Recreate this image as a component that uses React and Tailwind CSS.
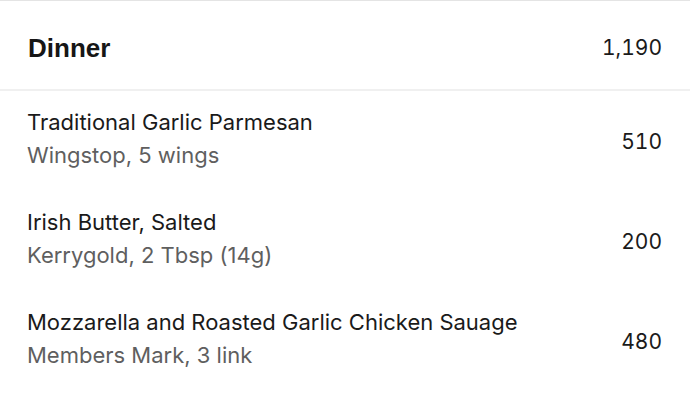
export default function App() {
  const items = [
    { t: "Traditional Garlic Parmesan", s: "Wingstop, 5 wings", c: "510" },
    { t: "Irish Butter, Salted", s: "Kerrygold, 2 Tbsp (14g)", c: "200" },
    { t: "Mozzarella and Roasted Garlic Chicken Sauage", s: "Members Mark, 3 link", c: "480" },
  ];
  return (
    <div className="w-[690px] h-[411px] bg-white overflow-hidden font-['Inter','Liberation_Sans',sans-serif] text-[#1a1a1a]">
      <div className="border-t border-[#e4e4e4] border-b-2 border-b-[#f0f0f0] flex items-center justify-between pl-[28px] pr-[28px] pt-[31px] pb-[25px]">
        <div className="text-[26px] leading-[32px] font-bold font-['Liberation_Sans',sans-serif] text-[#161616]">Dinner</div>
        <div className="text-[21px] leading-[32px] tabular-nums">1,190</div>
      </div>
      {items.map((it) => (
        <div key={it.c} className="h-[100px] flex items-center justify-between pl-[27px] pr-[28px]">
          <div className="flex flex-col -mt-[4px]">
            <div className="text-[22px] leading-[33px]">{it.t}</div>
            <div className="text-[22px] leading-[33px] text-[#5f5f5f]">{it.s}</div>
          </div>
          <div className="text-[21px] leading-[32px] tabular-nums mt-[2px]">{it.c}</div>
        </div>
      ))}
    </div>
  );
}
